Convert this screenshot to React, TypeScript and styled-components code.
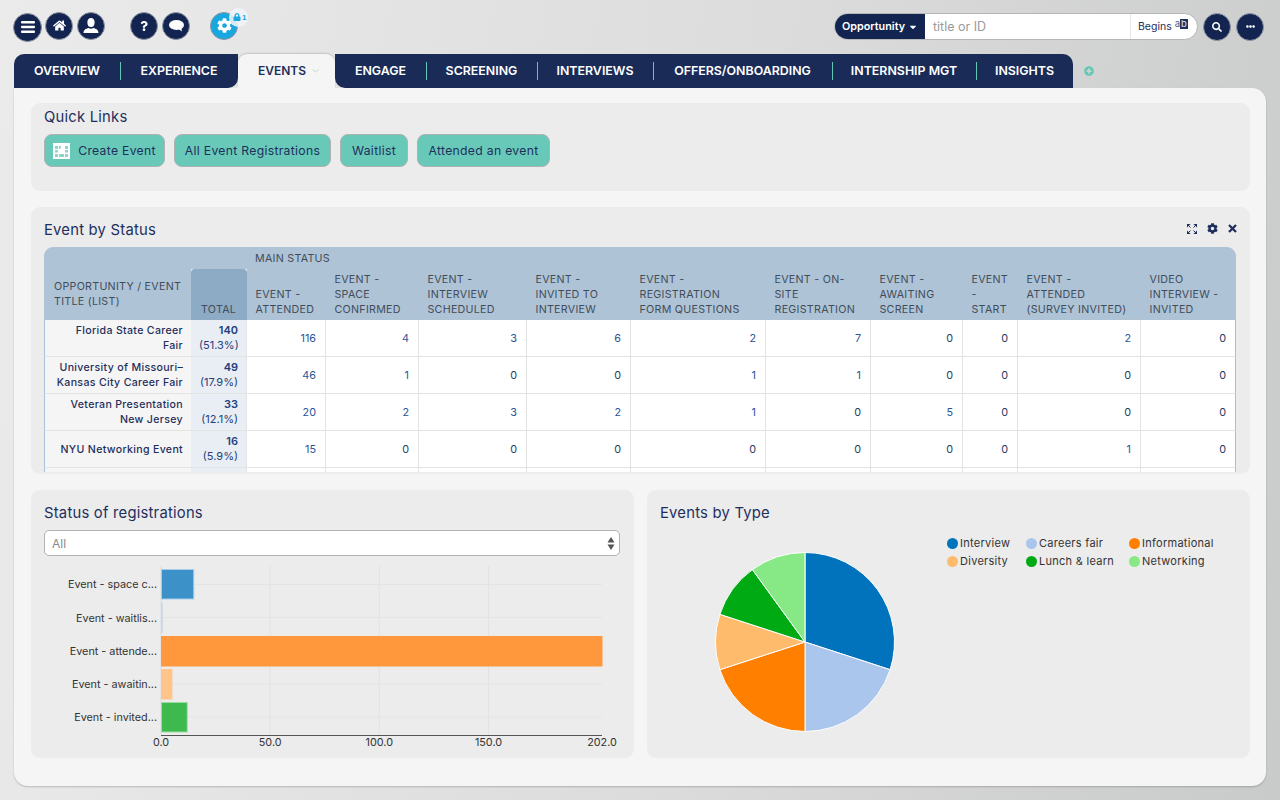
import React from "react";
import styled, { createGlobalStyle } from "styled-components";
import { FaHome, FaQuestion, FaCog, FaLock, FaSearch, FaEllipsisH, FaPlusCircle, FaCaretDown } from "react-icons/fa";

const FONT = `"Inter", "Open Sans", "Liberation Sans", sans-serif`;
const NAVY = "#12244f";
const TAB = "#1a2b58";
const INK = "#1f2f5c";

const Global = createGlobalStyle`
  html, body { margin: 0; padding: 0; height: 100%; }
  body { font-family: ${FONT}; background: linear-gradient(100deg, #ebebeb 0%, #dcdcdc 55%, #c9caca 100%); overflow: hidden; }
  * { box-sizing: border-box; }
`;

const Page = styled.div`
  width: 1280px;
  height: 800px;
  display: flex;
  flex-direction: column;
`;

const Header = styled.header`
  height: 54px;
  display: flex;
  align-items: center;
  justify-content: space-between;
  padding: 0 16px 1px 13px;
`;

const IconGroup = styled.div`
  display: flex;
  align-items: center;
`;

const Circle = styled.button<{ $bg?: string; $size?: number; $gap?: number; $drop?: number }>`
  width: ${p => p.$size ?? 28}px;
  height: ${p => p.$size ?? 28}px;
  margin-left: ${p => p.$gap ?? 0}px;
  margin-top: ${p => p.$drop ?? 0}px;
  padding: 0;
  border-radius: 50%;
  border: 1px solid #8f95a3;
  background: ${p => p.$bg ?? NAVY};
  color: #fff;
  display: flex;
  align-items: center;
  justify-content: center;
  flex: none;
  position: relative;
`;

const LockBadge = styled.span`
  position: absolute;
  top: -5px;
  right: -11px;
  width: 19px;
  height: 19px;
  border-radius: 50%;
  background: rgba(240, 244, 248, 0.88);
  color: #19a7e0;
  display: flex;
  align-items: center;
  justify-content: flex-start;
  padding-left: 4px;
  gap: 1px;
  font-size: 8px;
  font-weight: 700;
`;

const SearchBar = styled.div`
  width: 364px;
  height: 27px;
  display: flex;
  border-radius: 14px;
  border: 1px solid #b4b6b8;
  background: #fff;
  overflow: hidden;
`;

const SearchType = styled.div`
  width: 90px;
  background: ${NAVY};
  color: #fff;
  font-size: 10.8px;
  font-weight: 600;
  display: flex;
  align-items: center;
  justify-content: center;
  gap: 3px;
`;

const SearchInput = styled.div`
  flex: 1;
  font-size: 12.5px;
  color: #9a9a9a;
  display: flex;
  align-items: center;
  padding-left: 8px;
`;

const SearchMode = styled.div`
  width: 67px;
  border-left: 1px solid #e8e8e8;
  font-size: 10.5px;
  color: ${INK};
  display: flex;
  align-items: center;
  padding-left: 7px;
  gap: 3px;
`;

const AbMark = styled.span`
  font-size: 9.5px;
  line-height: 10px;
  margin-top: -6px;
  display: inline-flex;
  color: #4a5a7c;
  b { background: ${INK}; color: #dfe6f2; font-weight: 400; padding: 0 1px; }
`;

const TabBar = styled.nav`
  height: 34px;
  padding-left: 14px;
  display: flex;
  align-items: stretch;
`;

const TabGroup = styled.div<{ $radius: string }>`
  display: flex;
  background: ${TAB};
  border-radius: ${p => p.$radius};
`;

const Tab = styled.div<{ $w: number; $sep?: boolean }>`
  width: ${p => p.$w}px;
  color: #fff;
  font-size: 12.4px;
  font-weight: 600;
  padding-bottom: 1px;
  display: flex;
  align-items: center;
  justify-content: center;
  white-space: nowrap;
  position: relative;
  &::before {
    content: "";
    display: ${p => (p.$sep ? "block" : "none")};
    position: absolute;
    left: 0;
    top: 8px;
    bottom: 8px;
    width: 1px;
    background: #62c7b5;
  }
`;

const ActiveTab = styled.div`
  width: 97px;
  background: #f5f5f5;
  border-radius: 9px 9px 0 0;
  box-shadow: 0 -1px 2px rgba(0, 0, 0, 0.15);
  color: ${INK};
  font-size: 12px;
  font-weight: 600;
  padding: 0 0 1px 20px;
  display: flex;
  align-items: center;
  gap: 6px;
`;

const AddTab = styled.div`
  margin-left: 11px;
  display: flex;
  align-items: center;
  color: #62c7b5;
`;

const Main = styled.main`
  width: 1252px;
  height: 698px;
  margin-left: 14px;
  background: #f5f5f5;
  border-radius: 0 14px 14px 14px;
  box-shadow: 0 1px 2px rgba(0, 0, 0, 0.2);
  padding: 15px 16px 0 17px;
  display: flex;
  flex-direction: column;
  gap: 16px;
`;

const Panel = styled.section<{ $h: number; $top?: number }>`
  height: ${p => p.$h}px;
  background: #ececec;
  border-radius: 9px;
  padding: ${p => p.$top ?? 5}px 13px 0;
  position: relative;
`;

const SidePanel = styled(Panel)`
  width: 603px;
  flex: none;
`;

const PanelTitle = styled.h2`
  margin: 0;
  font-size: 14.8px;
  line-height: 18px;
  font-weight: 400;
  color: ${INK};
  letter-spacing: 0.015em;
`;

const LinkRow = styled.div`
  display: flex;
  margin-top: 8px;
  gap: 9px;
`;

const QuickLink = styled.div<{ $w: number }>`
  width: ${p => p.$w}px;
  height: 33px;
  background: #68c9b8;
  border: 1px solid #aeb2b2;
  border-radius: 8px;
  color: ${INK};
  font-size: 12.2px;
  letter-spacing: 0.025em;
  display: flex;
  align-items: center;
  justify-content: center;
  gap: 8px;
`;

const StatusHead = styled.div`
  height: 35px;
  padding-top: 9px;
`;

const PanelTools = styled.div`
  position: absolute;
  top: 16px;
  right: 13px;
  display: flex;
  gap: 10px;
  color: ${INK};
  align-items: center;
`;

const TableScroll = styled.div`
  height: 225px;
  width: 1192px;
  overflow: hidden;
  border-radius: 9px 9px 0 0;
`;

const Table = styled.table`
  border-collapse: separate;
  border-spacing: 0;
  table-layout: fixed;
  width: 1192px;
  font-size: 11px;
`;

const HeadRow = styled.tr<{ $h: number }>`
  height: ${p => p.$h}px;
`;

const HeadCell = styled.th<{ $dark?: boolean }>`
  background: ${p => (p.$dark ? "#8dabc5" : "#afc3d6")};
  border-radius: ${p => (p.$dark ? "4px 4px 0 0" : "0")};
  color: #414c59;
  font-weight: 400;
  font-size: 10.7px;
  line-height: 15px;
  letter-spacing: 0.025em;
  text-align: left;
  vertical-align: bottom;
  padding: 0 0 3px 8.5px;
  white-space: nowrap;
  text-transform: uppercase;
`;

const MainStatus = styled(HeadCell)`
  padding: 0 0 0 8px;
  vertical-align: middle;
`;

const EmptyHead = styled(HeadCell)`
  padding: 0;
`;

const LabelHead = styled(HeadCell)`
  vertical-align: middle;
  padding: 0 0 2px 10px;
`;

const TotalHead = styled(HeadCell)`
  padding-left: 10px;
`;

const TitleCell = styled.td`
  background: #f5f5f5;
  border-left: 1px solid #a9c0dc;
  border-bottom: 1px solid #e3e3e3;
  color: ${INK};
  font-weight: 500;
  font-size: 10.6px;
  line-height: 15px;
  text-align: right;
  padding: 0 8px;
  height: 37px;
  letter-spacing: 0.03em;
  white-space: nowrap;
`;

const TotalCell = styled.td`
  background: #e9eef5;
  border-bottom: 1px solid #e3e3e3;
  border-right: 1px solid #e3e3e3;
  color: #23407c;
  font-weight: 400;
  font-size: 11px;
  line-height: 15px;
  text-align: right;
  padding: 0 8px;
  white-space: nowrap;
  b { font-weight: 600; }
`;

const NumCell = styled.td<{ $link: boolean; $last?: boolean }>`
  background: #fff;
  border-bottom: 1px solid #e3e3e3;
  border-right: 1px solid ${p => (p.$last ? "#b0bccc" : "#e3e3e3")};
  color: ${p => (p.$link ? "#2b5599" : "#2a3a5f")};
  font-size: 10.8px;
  text-align: right;
  padding: 0 9px 0 0;
`;

const Columns = styled.div`
  display: flex;
  gap: 13px;
`;

const SelectBox = styled.div`
  width: 576px;
  height: 26px;
  margin-top: 8px;
  background: #fff;
  border: 1px solid #b2b2b2;
  border-radius: 5px;
  display: flex;
  align-items: center;
  justify-content: space-between;
  padding: 0 4px 0 7px;
  color: #8a8a8a;
  font-size: 12px;
`;

const ChartSvg = styled.svg`
  display: block;
  margin-top: 6px;
`;

const ChartText = styled.text`
  font-family: ${FONT};
  font-size: 10.8px;
  fill: #333;
`;

const PieRow = styled.div`
  display: flex;
  align-items: flex-start;
`;

const PieSvg = styled.svg`
  display: block;
  flex: none;
  margin-top: 25px;
`;

const Legend = styled.div`
  display: grid;
  grid-template-columns: 79px 103px auto;
  grid-auto-rows: 18px;
  margin-top: 12px;
`;

const LegendItem = styled.div`
  display: flex;
  align-items: center;
  gap: 2px;
  font-size: 11px;
  color: #333;
  letter-spacing: 0.025em;
  white-space: nowrap;
`;

const Dot = styled.span<{ $c: string }>`
  width: 11px;
  height: 11px;
  border-radius: 50%;
  background: ${p => p.$c};
  flex: none;
`;

const heads = [
  ["Event -", "Attended"],
  ["Event -", "Space", "Confirmed"],
  ["Event -", "Interview", "Scheduled"],
  ["Event -", "Invited to", "Interview"],
  ["Event -", "Registration", "Form Questions"],
  ["Event - On-", "Site", "Registration"],
  ["Event -", "Awaiting", "Screen"],
  ["Event", "-", "Start"],
  ["Event -", "Attended", "(Survey Invited)"],
  ["Video", "Interview -", "Invited"],
];
const widths = [147, 56, 79, 93, 108, 104, 135, 105, 92, 55, 123, 95];
const rows: { t: string[]; total: string; pct: string; v: (number | null)[] }[] = [
  { t: ["Florida State Career", "Fair"], total: "140", pct: "(51.3%)", v: [116, 4, 3, 6, 2, 7, 0, 0, 2, 0] },
  { t: ["University of Missouri–", "Kansas City Career Fair"], total: "49", pct: "(17.9%)", v: [46, 1, 0, 0, 1, 1, 0, 0, 0, 0] },
  { t: ["Veteran Presentation", "New Jersey"], total: "33", pct: "(12.1%)", v: [20, 2, 3, 2, 1, 0, 5, 0, 0, 0] },
  { t: ["NYU Networking Event"], total: "16", pct: "(5.9%)", v: [15, 0, 0, 0, 0, 0, 0, 0, 1, 0] },
  { t: [], total: "", pct: "", v: Array(10).fill(null) },
];

const Lines = ({ l }: { l: string[] }) => (
  <>
    {l.map((s, i) => (
      <React.Fragment key={i}>
        {i > 0 && <br />}
        {s}
      </React.Fragment>
    ))}
  </>
);

const Burger = () => (
  <svg width="14" height="12" viewBox="0 0 14 12" fill="#fff">
    <rect x="0" y="0" width="14" height="2.4" rx="1" />
    <rect x="0" y="4.8" width="14" height="2.4" rx="1" />
    <rect x="0" y="9.6" width="14" height="2.4" rx="1" />
  </svg>
);

const UserIcon = () => (
  <svg width="16" height="15" viewBox="0 0 16 15" fill="#fff">
    <ellipse cx="8" cy="4.6" rx="3.6" ry="4.5" />
    <path d="M.5 15c0-3.2 2.4-4.2 5-5 1.5.9 3.5.9 5 0 2.6.8 5 1.8 5 5z" />
  </svg>
);

const ChatIcon = () => (
  <svg width="15" height="12" viewBox="0 0 15 12" fill="#fff">
    <ellipse cx="7.5" cy="5" rx="7.5" ry="5" />
    <path d="M9 8.5l3.8 3-.3-4.4z" />
  </svg>
);

const CalendarIcon = () => (
  <svg width="17" height="16" viewBox="0 0 17 16">
    <rect width="17" height="16" fill="#fff" />
    <g fill="#8fd6c9">
      <rect x="2" y="3" width="3" height="3" />
      <rect x="6" y="3" width="2" height="3" />
      <rect x="12" y="3" width="3" height="3" />
      <rect x="2" y="7" width="3" height="2.5" />
      <rect x="12" y="7" width="3" height="2.5" />
      <rect x="2" y="11" width="3" height="3" />
      <rect x="6" y="11" width="5" height="3" />
      <rect x="12" y="11" width="3" height="3" />
    </g>
    <path d="M8.5 3.5l1.3 2.6 2.8.4-2 2 .5 2.8-2.6-1.4-2.6 1.4.5-2.8-2-2 2.8-.4z" fill="#fff" />
  </svg>
);

const ExpandIcon = () => (
  <svg width="10" height="10" viewBox="0 0 10 10" fill={INK}>
    <path d="M0 0h3.6L0 3.6zM10 0v3.6L6.4 0zM10 10H6.4L10 6.4zM0 10V6.4L3.6 10z" />
    <path d="M1.5 1.5l2 2M8.5 1.5l-2 2M8.5 8.5l-2-2M1.5 8.5l2-2" stroke={INK} strokeWidth="1" />
  </svg>
);

const CloseIcon = () => (
  <svg width="9" height="9" viewBox="0 0 9 9" fill="none" stroke={INK} strokeWidth="2.3">
    <path d="M1 1l7 7M8 1L1 8" />
  </svg>
);

const SelectArrows = () => (
  <svg width="8" height="13" viewBox="0 0 8 13" fill="#555">
    <path d="M4 0l3.5 5.5h-7zM4 13L.5 7.5h7z" />
  </svg>
);

const bars = [
  { label: "Event - space c...", v: 15, y: 569, fill: "#3c91c9", stroke: "#a7cbe8" },
  { label: "Event - waitlis...", v: 0.6, y: 602.5, fill: "#c9d8ec", stroke: "#c9d8ec" },
  { label: "Event - attende...", v: 202, y: 636, fill: "#ff983c", stroke: "#ff983c" },
  { label: "Event - awaitin...", v: 5, y: 669, fill: "#ffc48a", stroke: "#ffc48a" },
  { label: "Event - invited...", v: 12, y: 702, fill: "#3db94d", stroke: "#9bdca3" },
];
const X0 = 161;
const SCALE = 441 / 202;

const BarChart = () => (
  <ChartSvg width="576" height="190" viewBox="44 562 576 190">
    {[50, 100, 150].map(t => (
      <line key={t} x1={X0 + t * SCALE} x2={X0 + t * SCALE} y1="566" y2="735" stroke="#e2e2e2" />
    ))}
    {[584.5, 617.5, 651, 684, 717].map(y => (
      <line key={y} x1={X0} x2="602" y1={y} y2={y} stroke="#e4e4e4" />
    ))}
    <line x1={X0} x2={X0} y1="566" y2="735" stroke="#dcdcdc" />
    {bars.map(b => (
      <g key={b.label}>
        <rect x={X0 + 0.5} y={b.y + 0.5} width={b.v * SCALE - 0.5} height="29.5" fill={b.fill} stroke={b.stroke} />
        <ChartText x="157" y={b.y + 19} textAnchor="end">{b.label}</ChartText>
      </g>
    ))}
    <line x1={X0} x2="602" y1="735.5" y2="735.5" stroke="#555" />
    {[0, 50, 100, 150, 202].map(t => (
      <ChartText key={t} x={X0 + t * SCALE} y="746" textAnchor="middle">{t.toFixed(1)}</ChartText>
    ))}
  </ChartSvg>
);

const slices = [
  { v: 30, c: "#0173bc", n: "Interview" },
  { v: 20, c: "#aac6ec", n: "Careers fair" },
  { v: 20, c: "#ff7f00", n: "Informational" },
  { v: 10, c: "#ffbb6c", n: "Diversity" },
  { v: 10, c: "#00aa12", n: "Lunch & learn" },
  { v: 10, c: "#86e986", n: "Networking" },
];

const Pie = () => {
  const R = 89.5;
  let acc = 0;
  const pt = (p: number) => {
    const a = (p / 100) * 2 * Math.PI;
    return `${(R * Math.sin(a)).toFixed(2)} ${(-R * Math.cos(a)).toFixed(2)}`;
  };
  return (
    <PieSvg width="287" height="190" viewBox="660 547 287 190">
      <g transform="translate(805 642)">
        {slices.map(s => {
          const d = `M0 0L${pt(acc)}A${R} ${R} 0 0 1 ${pt(acc + s.v)}Z`;
          acc += s.v;
          return <path key={s.n} d={d} fill={s.c} stroke="#fff" strokeWidth="1" />;
        })}
      </g>
    </PieSvg>
  );
};

export default function App() {
  return (
    <Page>
      <Global />
      <Header>
        <IconGroup>
          <Circle $size={29} $drop={1}><Burger /></Circle>
          <Circle $gap={3} $drop={-2}><FaHome size={13} /></Circle>
          <Circle $gap={4} $drop={-2}><UserIcon /></Circle>
          <Circle $gap={25} $drop={-2}><FaQuestion size={10} /></Circle>
          <Circle $gap={4} $drop={-2}><ChatIcon /></Circle>
          <Circle $gap={20} $bg="#19a7e0" $drop={-2}>
            <FaCog size={15} />
            <LockBadge><FaLock size={8} />1</LockBadge>
          </Circle>
        </IconGroup>
        <IconGroup>
          <SearchBar>
            <SearchType>Opportunity<FaCaretDown size={10} /></SearchType>
            <SearchInput>title or ID</SearchInput>
            <SearchMode>Begins<AbMark>a<b>b</b></AbMark></SearchMode>
          </SearchBar>
          <Circle $gap={5}><FaSearch size={10} /></Circle>
          <Circle $gap={5}><FaEllipsisH size={9} /></Circle>
        </IconGroup>
      </Header>
      <TabBar>
        <TabGroup $radius="10px 0 10px 0">
          <Tab $w={106}>OVERVIEW</Tab>
          <Tab $w={118} $sep>EXPERIENCE</Tab>
        </TabGroup>
        <ActiveTab>EVENTS<svg width="7" height="4" viewBox="0 0 7 4" fill="none" stroke="#bcdcd6"><path d="M.5.5l3 2.5 3-2.5" /></svg></ActiveTab>
        <TabGroup $radius="0 10px 0 10px">
          <Tab $w={91}>ENGAGE</Tab>
          <Tab $w={111} $sep>SCREENING</Tab>
          <Tab $w={116} $sep>INTERVIEWS</Tab>
          <Tab $w={179} $sep>OFFERS/ONBOARDING</Tab>
          <Tab $w={144} $sep>INTERNSHIP MGT</Tab>
          <Tab $w={97} $sep>INSIGHTS</Tab>
        </TabGroup>
        <AddTab><FaPlusCircle size={10} /></AddTab>
      </TabBar>
      <Main>
        <Panel $h={88}>
          <PanelTitle>Quick Links</PanelTitle>
          <LinkRow>
            <QuickLink $w={121}><CalendarIcon />Create Event</QuickLink>
            <QuickLink $w={157}>All Event Registrations</QuickLink>
            <QuickLink $w={68}>Waitlist</QuickLink>
            <QuickLink $w={133}>Attended an event</QuickLink>
          </LinkRow>
        </Panel>
        <Panel $h={267}>
          <StatusHead><PanelTitle>Event by Status</PanelTitle></StatusHead>
          <PanelTools>
            <ExpandIcon />
            <FaCog size={11} />
            <CloseIcon />
          </PanelTools>
          <TableScroll>
            <Table>
              <colgroup>
                {widths.map((w, i) => <col key={i} style={{ width: w }} />)}
              </colgroup>
              <thead>
                <HeadRow $h={22}>
                  <EmptyHead colSpan={2} />
                  <MainStatus colSpan={10}>Main Status</MainStatus>
                </HeadRow>
                <HeadRow $h={51}>
                  <LabelHead>Opportunity / Event<br />Title (List)</LabelHead>
                  <TotalHead $dark>Total</TotalHead>
                  {heads.map((h, i) => <HeadCell key={i}><Lines l={h} /></HeadCell>)}
                </HeadRow>
              </thead>
              <tbody>
                {rows.map((r, ri) => (
                  <tr key={ri}>
                    <TitleCell><Lines l={r.t} /></TitleCell>
                    <TotalCell><b>{r.total}</b>{r.pct && <br />}{r.pct}</TotalCell>
                    {r.v.map((n, i) => <NumCell key={i} $link={(n ?? 0) > 0} $last={i === 9}>{n}</NumCell>)}
                  </tr>
                ))}
              </tbody>
            </Table>
          </TableScroll>
        </Panel>
        <Columns>
          <SidePanel $h={268} $top={14}>
            <PanelTitle>Status of registrations</PanelTitle>
            <SelectBox>All<SelectArrows /></SelectBox>
            <BarChart />
          </SidePanel>
          <SidePanel $h={268} $top={14}>
            <PanelTitle>Events by Type</PanelTitle>
            <PieRow>
              <Pie />
              <Legend>
                {slices.map(s => (
                  <LegendItem key={s.n}><Dot $c={s.c} />{s.n}</LegendItem>
                ))}
              </Legend>
            </PieRow>
          </SidePanel>
        </Columns>
      </Main>
    </Page>
  );
}
